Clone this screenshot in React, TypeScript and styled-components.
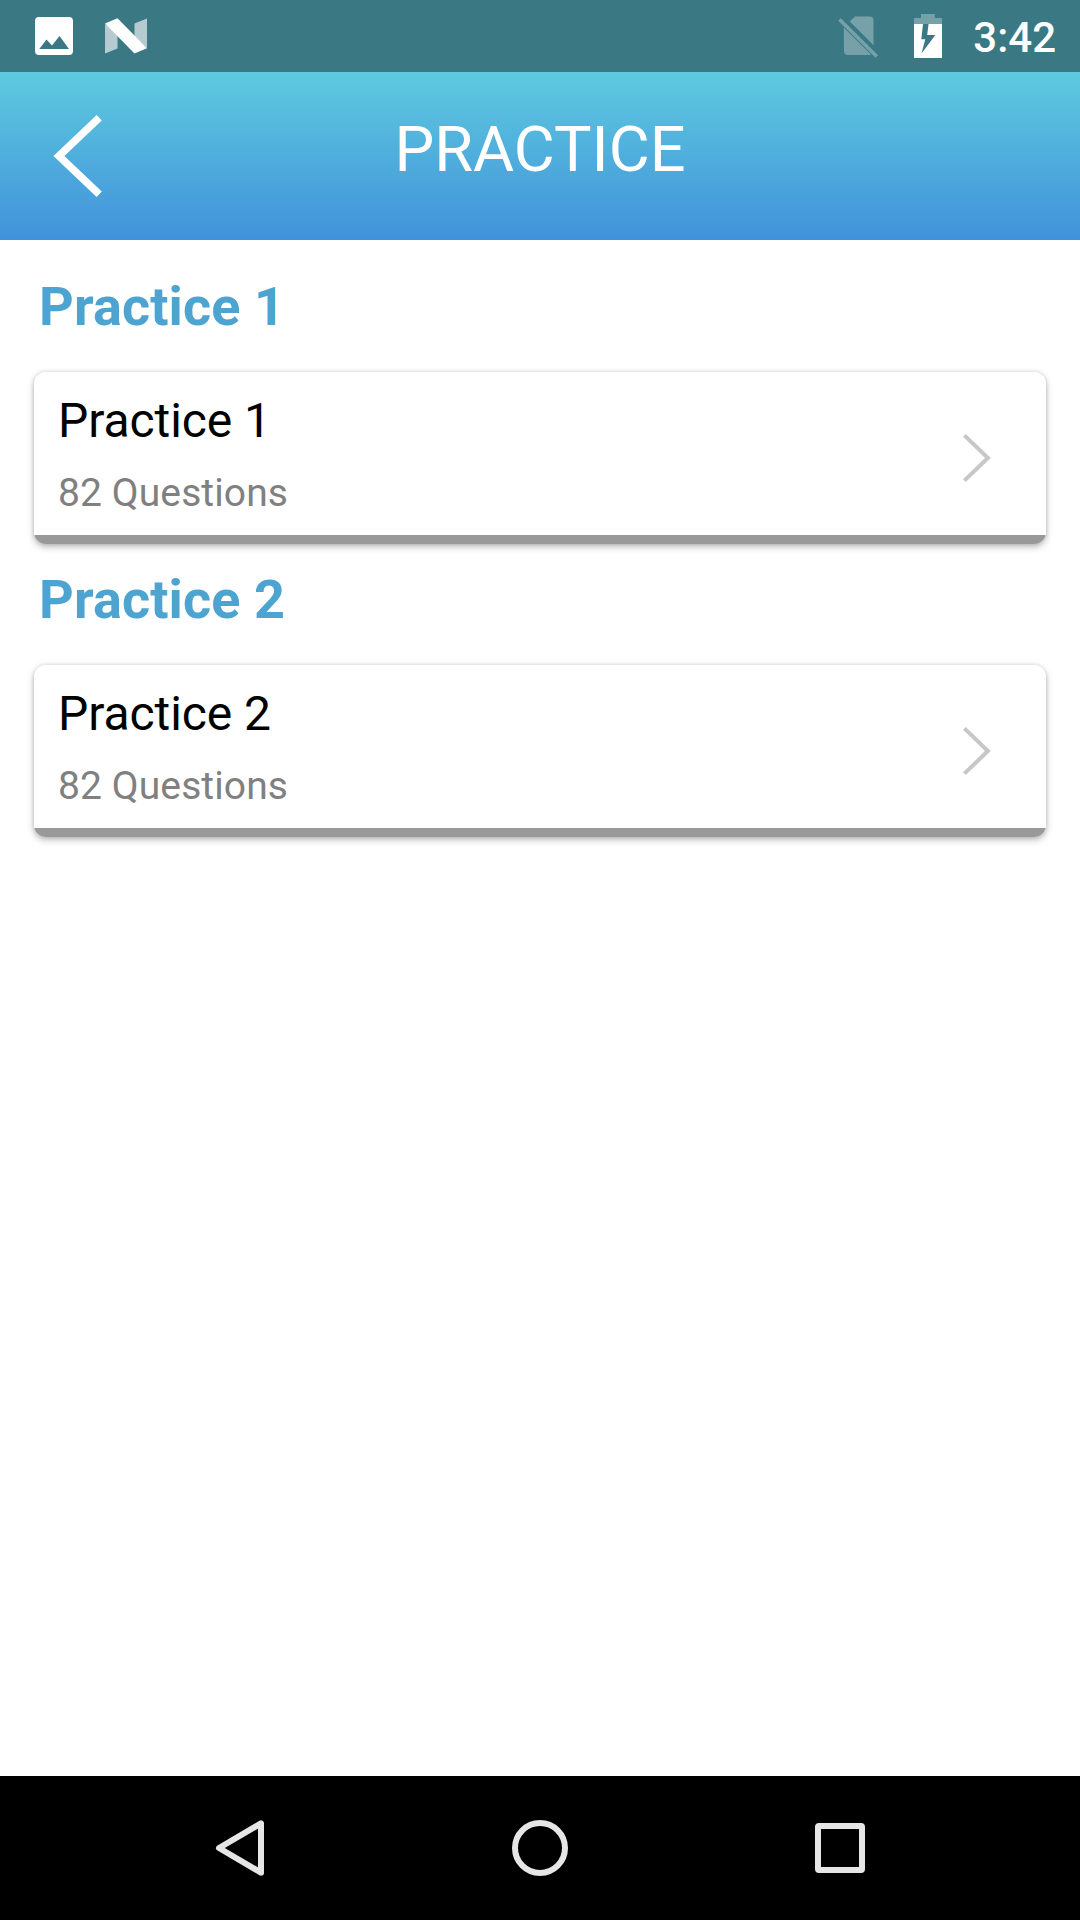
import React from "react";
import styled, { createGlobalStyle } from "styled-components";

const GlobalStyle = createGlobalStyle`
  * { box-sizing: border-box; }
  body { margin: 0; background: #fff; font-family: Roboto, sans-serif; }
`;

const Screen = styled.div`
  width: 1080px;
  height: 1920px;
  display: flex;
  flex-direction: column;
  background: #fff;
  overflow: hidden;
`;

const StatusBar = styled.div`
  height: 72px;
  flex: none;
  display: flex;
  justify-content: space-between;
  background: #3a7883;
  padding: 0 24px 0 32px;
`;

const StatusGroup = styled.div<{ $gap: number }>`
  display: flex;
  gap: ${(p) => p.$gap}px;
`;

const StatusIcon = styled.svg`
  display: block;
  height: 72px;
`;

const Clock = styled.span`
  width: 83px;
  text-align: right;
  white-space: nowrap;
  font-size: 42px;
  font-weight: 500;
  line-height: 75px;
  color: #fff;
`;

const Header = styled.header`
  height: 168px;
  flex: none;
  display: grid;
  grid-template-columns: 160px 1fr 160px;
  background: linear-gradient(#5dcade, #4292db);
`;

const BackButton = styled.button`
  border: 0;
  padding: 0;
  background: none;
  height: 168px;
`;

const Title = styled.h1`
  margin: 0;
  font-size: 63px;
  font-weight: 400;
  line-height: 155px;
  text-align: center;
  color: #fff;
`;

const List = styled.main`
  flex: 1;
  padding: 11px 34px 0;
`;

const SectionTitle = styled.h2`
  margin: 0 0 10px;
  padding-left: 5px;
  font-size: 54px;
  font-weight: 700;
  letter-spacing: 0.1px;
  line-height: 111px;
  color: #4da4d0;
`;

const Card = styled.div`
  height: 172px;
  display: flex;
  justify-content: space-between;
  align-items: center;
  padding: 0 53px 0 24px;
  border-radius: 12px;
  background: linear-gradient(#fff 163px, #999 163px);
  box-shadow: 0 3px 7px rgba(0, 0, 0, 0.25), 0 0 4px rgba(0, 0, 0, 0.14);
`;

const CardText = styled.div`
  align-self: flex-start;
  padding-top: 20px;
`;

const CardTitle = styled.div`
  font-size: 48px;
  line-height: 57px;
  letter-spacing: -0.08px;
  color: #000;
`;

const CardMeta = styled.div`
  margin-top: 21px;
  font-size: 39px;
  line-height: 46px;
  letter-spacing: 0.1px;
  color: #808080;
`;

const Chevron = styled.svg`
  display: block;
`;

const NavBar = styled.nav`
  height: 144px;
  flex: none;
  display: flex;
  justify-content: space-between;
  align-items: center;
  padding: 0 204px;
  background: #000;
`;

const NavIcon = styled.svg`
  display: block;
  width: 72px;
  height: 144px;
  fill: none;
  stroke: #e6e6e6;
  stroke-width: 6;
  stroke-linejoin: round;
`;

const sections = [
  { name: "Practice 1", count: 82 },
  { name: "Practice 2", count: 82 },
];

export default function App() {
  return (
    <Screen>
      <GlobalStyle />
      <StatusBar>
        <StatusGroup $gap={22}>
          <StatusIcon width="46" viewBox="32 0 46 72">
            <path
              fill="#fff"
              fillRule="evenodd"
              d="M39 17H69a4 4 0 0 1 4 4V51a4 4 0 0 1-4 4H39a4 4 0 0 1-4-4V21a4 4 0 0 1 4-4ZM39.300 49H69L59.500 36L52 45.500L46.500 39.500Z"
            />
          </StatusIcon>
          <StatusIcon width="54" viewBox="100 0 54 72">
            <path fill="#b5cbd0" d="M105 24L117.500 33V48.500L105 53.500ZM134.500 23.500L147 18.500V48L134.500 37Z" />
            <path fill="#fff" d="M105 23.500L117.500 18.300L147 48.300L134.500 53.500Z" />
          </StatusIcon>
        </StatusGroup>
        <StatusGroup $gap={19}>
          <StatusIcon width="50" viewBox="835 0 50 72">
            <path fill="#76a1a8" d="M849.800 21.500L855 16.500H869.500a4 4 0 0 1 4 4V45.200ZM843.800 27.500L871 54.500Q870 55 869.500 55H848a4 4 0 0 1-4-4Z" />
            <path stroke="#76a1a8" strokeWidth="3.600" d="M839.500 19.500L876.800 56.500" />
          </StatusIcon>
          <StatusIcon width="50" viewBox="904 0 50 72">
            <path fill="#76a1a8" d="M914 18h7v-4h13.700v4h7.300v6H914Z" />
            <path fill="#fff" d="M914 24h28v34H914Z" />
            <path fill="#3a7883" d="M923 24H928.500L927.200 35H935.300L921.500 53.500L925.300 39.300H921.300Z" />
          </StatusIcon>
          <Clock>3:42</Clock>
        </StatusGroup>
      </StatusBar>
      <Header>
        <BackButton aria-label="Back">
          <Chevron width="160" height="168" viewBox="0 72 160 168">
            <path fill="none" stroke="#fff" strokeWidth="7.500" d="M99.200 117.800L58.900 156L99.200 194.200" />
          </Chevron>
        </BackButton>
        <Title>PRACTICE</Title>
      </Header>
      <List>
        {sections.map((s) => (
          <section key={s.name}>
            <SectionTitle>{s.name}</SectionTitle>
            <Card>
              <CardText>
                <CardTitle>{s.name}</CardTitle>
                <CardMeta>{s.count} Questions</CardMeta>
              </CardText>
              <Chevron width="33" height="52" viewBox="960 432 33 52">
                <path fill="none" stroke="#c7c7c7" strokeWidth="4" d="M964.400 435.400L987.900 458L964.400 480.600" />
              </Chevron>
            </Card>
          </section>
        ))}
      </List>
      <NavBar>
        <NavIcon viewBox="204 1776 72 144">
          <path d="M261 1823.300V1872.700L219 1848Z" />
        </NavIcon>
        <NavIcon viewBox="504 1776 72 144">
          <circle cx="540" cy="1848" r="25" />
        </NavIcon>
        <NavIcon viewBox="804 1776 72 144">
          <rect x="818" y="1826" width="44" height="44" rx="1" />
        </NavIcon>
      </NavBar>
    </Screen>
  );
}
